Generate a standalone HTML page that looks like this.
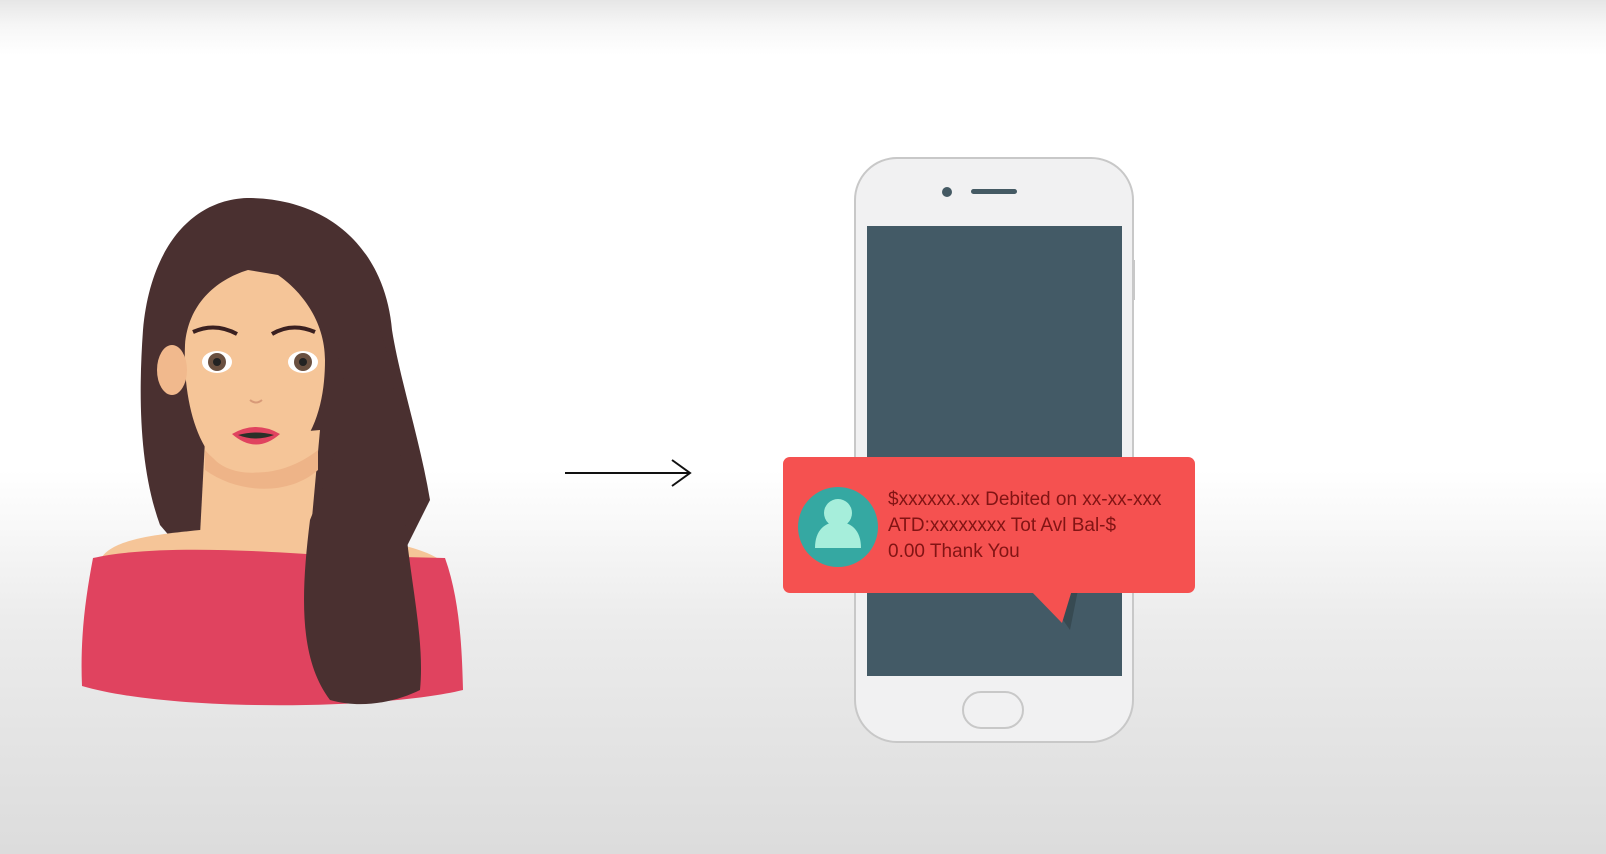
<!DOCTYPE html>
<html><head><meta charset="utf-8"><style>
html,body{margin:0;padding:0}
body{width:1606px;height:854px;overflow:hidden;background:linear-gradient(#e6e6e6 0px,#f6f6f6 25px,#fff 55px,#fff 470px,#ececec 620px,#dcdcdc 854px);font-family:"Liberation Sans",sans-serif}
svg{position:absolute;left:0;top:0}
</style></head><body>
<svg width="1606" height="854" viewBox="0 0 1606 854">
<!-- woman -->
<path d="M247 198 C190 200 150 250 143 330 C138 400 140 470 160 525 L190 560 L400 560 L430 500 C420 440 400 380 392 330 C385 250 330 198 247 198Z" fill="#4a3030"/>
<path d="M205 440 L200 535 L310 540 L320 430Z" fill="#f5c598"/>
<path d="M205 450 C230 480 280 480 318 450 L318 470 C290 495 240 495 205 470Z" fill="#eeb488"/>
<path d="M100 560 C110 540 150 535 200 530 L300 530 C360 535 420 545 440 560 L440 600 L100 600Z" fill="#f5c598"/>
<path d="M248 270 C215 280 188 305 185 345 C183 395 195 440 215 460 C230 475 265 478 285 462 C315 440 325 400 325 360 C325 320 300 290 278 275 Z" fill="#f5c598"/>
<ellipse cx="172" cy="370" rx="15" ry="25" fill="#f1b98d"/>
<path d="M93 558 C150 545 250 550 320 555 L445 558 C460 600 462 650 463 690 C380 710 170 712 82 686 C80 640 85 600 93 558Z" fill="#e0435f"/>
<path d="M335 350 C360 400 330 470 310 520 C300 600 300 660 330 700 C365 710 400 700 420 690 C425 640 410 580 405 520 C400 440 395 370 380 330Z" fill="#4a3030"/>
<path d="M193 332 Q215 322 237 334" stroke="#3a2020" stroke-width="4" fill="none"/>
<path d="M272 334 Q292 322 315 332" stroke="#3a2020" stroke-width="4" fill="none"/>
<ellipse cx="217" cy="362" rx="15" ry="11" fill="#fff"/><circle cx="217" cy="362" r="9" fill="#6a5040"/><circle cx="217" cy="362" r="4" fill="#222"/>
<ellipse cx="303" cy="362" rx="15" ry="11" fill="#fff"/><circle cx="303" cy="362" r="9" fill="#6a5040"/><circle cx="303" cy="362" r="4" fill="#222"/>
<path d="M250 400 Q256 405 262 400" stroke="#d89a78" stroke-width="2" fill="none"/>
<path d="M232 434 Q256 420 280 434 Q256 455 232 434Z" fill="#e0435f"/>
<path d="M238 435 Q256 430 274 435 Q256 442 238 435Z" fill="#2a3028"/>
<!-- arrow -->
<path d="M565 473 L690 473 M672 460 L690 473 L672 486" stroke="#111" stroke-width="2" fill="none"/>
<!-- phone -->
<rect x="855" y="158" width="278" height="584" rx="42" fill="#f1f1f2" stroke="#c8c8c8" stroke-width="2"/>
<rect x="1132" y="260" width="3" height="40" fill="#c8c8c8"/>
<rect x="867" y="226" width="255" height="450" fill="#435a66"/>
<circle cx="947" cy="192" r="5" fill="#455a64"/>
<rect x="971" y="189" width="46" height="5" rx="2.5" fill="#455a64"/>
<rect x="963" y="692" width="60" height="36" rx="18" fill="none" stroke="#c8c8c8" stroke-width="2"/>
<!-- bubble -->
<path d="M1042 590 L1070 630 L1078 590Z" fill="#374a52"/>
<path d="M1030 590 L1062 623 L1072 590Z" fill="#f55150"/>
<rect x="783" y="457" width="412" height="136" rx="7" fill="#f55150"/>
<circle cx="838" cy="527" r="40" fill="#35a8a2"/>
<circle cx="838" cy="513" r="14" fill="#a6eedb"/>
<path d="M815 548 C815 530 825 522 838 522 C851 522 861 530 861 548Z" fill="#a6eedb"/>
<g font-size="19" fill="#821414" style="white-space:pre">
<text x="888" y="505">$xxxxxx.xx   Debited on xx-xx-xxx</text>
<text x="888" y="531">ATD:xxxxxxxx Tot Avl Bal-$</text>
<text x="888" y="557">0.00 Thank You</text>
</g>
</svg>
</body></html>
